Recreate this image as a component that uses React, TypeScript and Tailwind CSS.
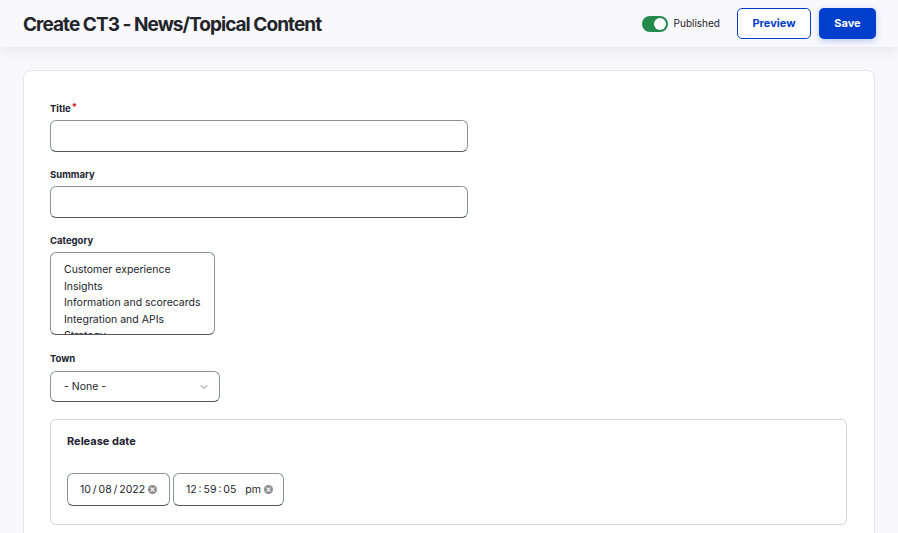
import { ChevronDown } from 'lucide-react';

function ClearIcon() {
  return (
    <svg width="9" height="9" viewBox="0 0 10 10" className="ml-[3px]">
      <circle cx="5" cy="5" r="5" fill="#8e8e93" />
      <path d="M3.2 3.2 L6.8 6.8 M6.8 3.2 L3.2 6.8" stroke="#fff" strokeWidth="1.3" strokeLinecap="round" />
    </svg>
  );
}

export default function App() {
  const categories = [
    'Customer experience',
    'Insights',
    'Information and scorecards',
    'Integration and APIs',
    'Strategy',
  ];

  return (
    <div className="h-[533px] overflow-hidden bg-[#f7f7fc] text-[#222330]" style={{ fontFamily: 'Inter, "Noto Sans", sans-serif' }}>
      {/* Header */}
      <header className="h-[47px] bg-[#f8f8fd] shadow-[0_5px_12px_rgba(0,0,0,0.06)] flex items-center pl-[23px] pr-[22px] relative z-10">
        <h1 className="text-[19px] font-bold tracking-[-0.05em] text-[#232429] flex-1 pt-[3px]">Create CT3 - News/Topical Content</h1>
        <div className="flex items-center gap-[6px] mr-[17px]">
          <div className="w-[26px] h-[16px] rounded-full bg-[#228a4d] flex items-center justify-end pr-[2px]">
            <div className="w-[12px] h-[12px] rounded-full bg-white" />
          </div>
          <span className="text-[10px] text-[#232429]">Published</span>
        </div>
        <button className="h-[31px] w-[74px] rounded-[5px] border border-[#003ecc] bg-white text-[#003ecc] text-[11px] font-bold mr-[8px]">Preview</button>
        <button className="h-[31px] w-[57px] rounded-[5px] bg-[#003ecc] text-white text-[11px] font-bold shadow-[0_2px_6px_rgba(0,62,204,0.25)]">Save</button>
      </header>

      {/* Content */}
      <main className="pt-[23px] px-[23px]">
        <div className="bg-white border border-[#e6e6eb] rounded-[8px] pl-[26px] pr-[27px] pt-[32px] pb-[20px]">
          {/* Title */}
          <div className="mb-[17px]">
            <label className="flex text-[9.5px] font-bold mb-[5px] leading-[12px]">
              Title<span className="text-[#dc2323] ml-[1px] -mt-[2px]">*</span>
            </label>
            <input className="block w-[418px] h-[32px] rounded-[6px] border border-[#8e929c] border-b-[#55565b] bg-white" />
          </div>

          {/* Summary */}
          <div className="mb-[17px]">
            <label className="block text-[9.5px] font-bold mb-[5px] leading-[12px]">Summary</label>
            <input className="block w-[418px] h-[32px] rounded-[6px] border border-[#8e929c] border-b-[#55565b] bg-white" />
          </div>

          {/* Category */}
          <div className="mb-[18px]">
            <label className="block text-[9.5px] font-bold mb-[5px] leading-[12px]">Category</label>
            <div className="w-[165px] h-[83px] rounded-[6px] border border-[#8e929c] border-b-[#55565b] overflow-hidden pl-[13px] pt-[9px]">
              {categories.map((c) => (
                <div key={c} className="text-[10.5px] leading-[16.5px] text-[#232429] whitespace-nowrap">{c}</div>
              ))}
            </div>
          </div>

          {/* Town */}
          <div className="mb-[17px]">
            <label className="block text-[9.5px] font-bold mb-[6px] leading-[12px]">Town</label>
            <div className="w-[170px] h-[31px] rounded-[6px] border border-[#8e929c] border-b-[#55565b] flex items-center pl-[13px] pr-[9px]">
              <span className="flex-1 text-[10.5px] text-[#232429]">- None -</span>
              <ChevronDown className="w-[12px] h-[12px] text-[#55565b]" strokeWidth={1.5} />
            </div>
          </div>

          {/* Release date */}
          <fieldset className="border border-[#d4d4d8] rounded-[6px] pl-[16px] pt-[14px] pb-[18px]">
            <div className="text-[11px] font-bold leading-[14px] mb-[25px]">Release date</div>
            <div className="flex gap-[3px]">
              <div className="w-[103px] h-[33px] rounded-[6px] border border-[#8e929c] border-b-[#55565b] flex items-center pl-[12px] text-[10.5px] text-[#232429]">
                10{'\u2009'}/{'\u2009'}08{'\u2009'}/{'\u2009'}2022<ClearIcon />
              </div>
              <div className="w-[111px] h-[33px] rounded-[6px] border border-[#8e929c] border-b-[#55565b] flex items-center pl-[12px] text-[10.5px] text-[#232429]">
                12{'\u2009'}:{'\u2009'}59{'\u2009'}:{'\u2009'}05&nbsp;&nbsp; pm<ClearIcon />
              </div>
            </div>
          </fieldset>
        </div>
      </main>
    </div>
  );
}
